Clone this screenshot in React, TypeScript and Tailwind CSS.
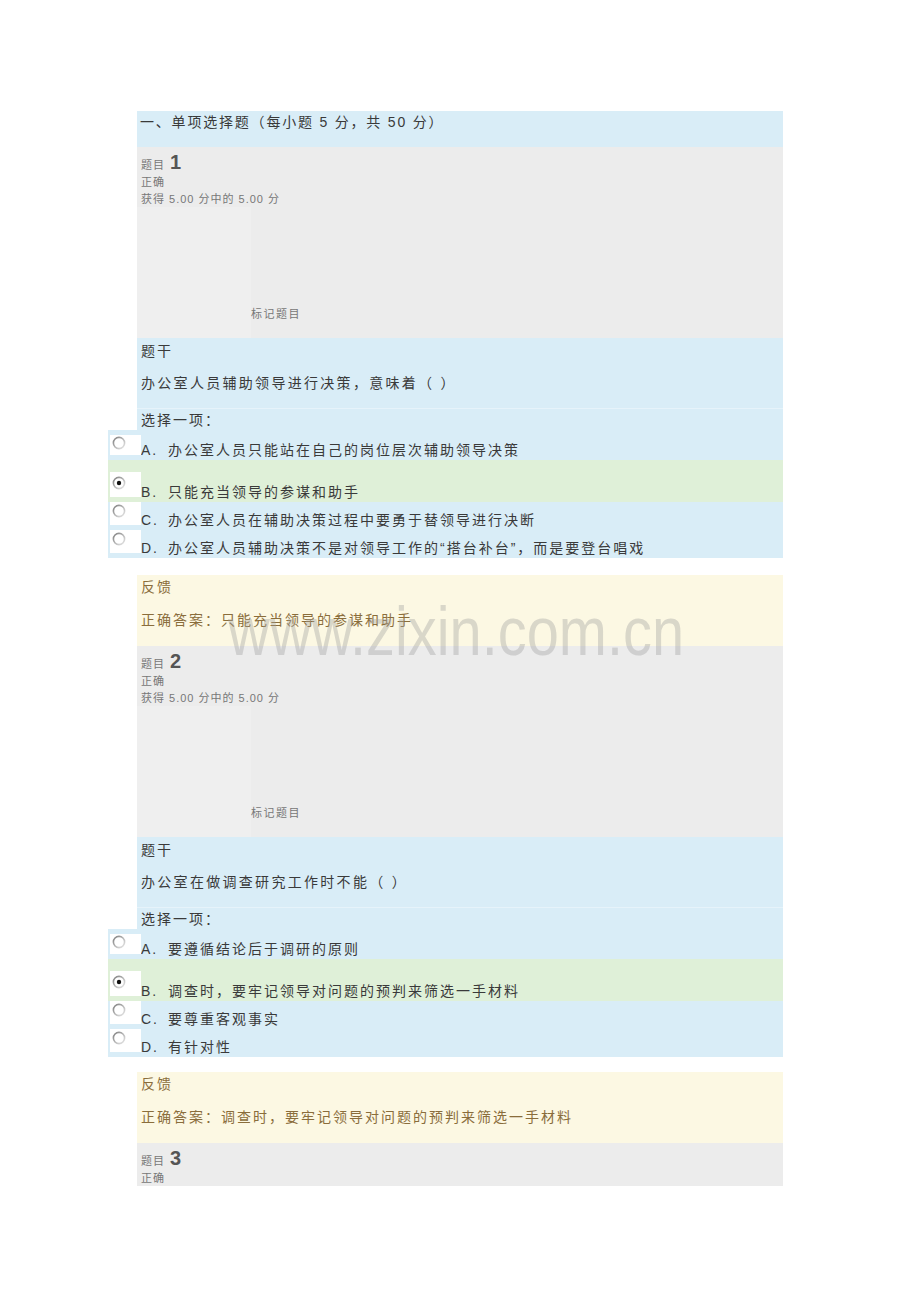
import React from "react";

function Radio({ checked, id }: { checked?: boolean; id: string }) {
  return (
    <svg width="14" height="14" viewBox="0 0 14 14">
      <defs>
        <linearGradient id={id} x1="0" y1="0" x2="1" y2="1">
          <stop offset="0" stopColor="#7d7d7d" />
          <stop offset="0.5" stopColor="#b5b5b5" />
          <stop offset="1" stopColor="#e8e8e8" />
        </linearGradient>
      </defs>
      <circle cx="7" cy="7" r="5.6" fill="#ffffff" stroke={`url(#${id})`} strokeWidth="1.6" />
      {checked && <circle cx="7" cy="7" r="2.2" fill="#111111" />}
    </svg>
  );
}

type Opt = {
  letter: string;
  text: string;
  checked?: boolean;
  rowCls: string;
  boxCls: string;
  radioCls: string;
};

function OptionRow({ o, id }: { o: Opt; id: string }) {
  return (
    <div className={o.rowCls}>
      <div className={o.boxCls}>
        <div className={o.radioCls}>
          <Radio checked={o.checked} id={id} />
        </div>
      </div>
      <div className="flex text-[14px] leading-[18px] tracking-[2px] text-[#3a3a3a] whitespace-nowrap">
        <span className="w-[27px]">{o.letter}</span>
        <span>{o.text}</span>
      </div>
    </div>
  );
}

function InfoBlock({ n, full }: { n: string; full: boolean }) {
  if (!full) {
    return (
      <div className="bg-[#ececec] h-[43px] pt-[4px] pl-[4px] overflow-hidden">
        <div className="flex items-baseline leading-[22px] h-[22px]">
          <span className="text-[11px] tracking-[1px] text-[#777777]">题目</span>
          <span className="ml-[5px] text-[20px] font-bold text-[#555555]">{n}</span>
        </div>
        <div className="text-[11px] leading-[18px] tracking-[1px] text-[#777777]">正确</div>
      </div>
    );
  }
  return (
    <div className="bg-[#ececec] h-[191px] flex flex-col">
      <div className="pt-[4px] pl-[4px] h-[60px]">
        <div className="flex items-baseline leading-[22px] h-[22px]">
          <span className="text-[11px] tracking-[1px] text-[#777777]">题目</span>
          <span className="ml-[5px] text-[20px] font-bold text-[#555555]">{n}</span>
        </div>
        <div className="text-[11px] leading-[18px] tracking-[1px] text-[#777777]">正确</div>
        <div className="text-[11px] leading-[16px] tracking-[1px] text-[#777777] whitespace-nowrap">
          获得 5.00 分中的 5.00 分
        </div>
      </div>
      <div className="flex flex-1">
        <div className="w-[114px] bg-[#efefef]" />
        <div className="flex-1 flex items-end pb-[16px]">
          <span className="text-[11px] leading-[16px] tracking-[1.5px] text-[#777777]">标记题目</span>
        </div>
      </div>
    </div>
  );
}

function Question({
  n,
  stem,
  options,
  answer,
  gap,
  idp,
}: {
  n: string;
  stem: string;
  options: Opt[];
  answer: string;
  gap: string;
  idp: string;
}) {
  return (
    <div>
      <InfoBlock n={n} full />
      <div className="bg-[#d9edf7]">
        <div className="h-[30px] pt-[4px] pl-[4px] text-[14px] leading-[18px] tracking-[2px] text-[#3a3a3a]">题干</div>
        <div className="h-[41px] pt-[6px] pl-[4px] border-b border-[#e6f3fa] text-[14px] leading-[18px] tracking-[2.3px] text-[#3a3a3a] whitespace-nowrap">
          {stem}
        </div>
        <div className="h-[21px] pt-[2px] pl-[4px] text-[14px] leading-[18px] tracking-[2px] text-[#3a3a3a]">选择一项：</div>
      </div>
      <div className="-ml-[29px] w-[675px]">
        {options.map((o, i) => (
          <OptionRow key={i} o={o} id={`${idp}-${i}`} />
        ))}
      </div>
      <div className={gap}>
        <div className="bg-[#fcf8e3] h-[71px] pt-[3px] pl-[4px] text-[14px] leading-[18px] tracking-[2px] text-[#8a6d3b]">
          <div>反馈</div>
          <div className="mt-[15px] whitespace-nowrap">{answer}</div>
        </div>
      </div>
    </div>
  );
}

const rowA = "flex items-end h-[30px] pb-[1px] bg-[#d9edf7]";
const rowB = "flex items-end h-[42px] pb-[1px] bg-[#dff0d8]";
const rowC = "flex items-end h-[28px] pb-[1px] bg-[#d9edf7]";
const boxA = "relative ml-[2px] mb-[4px] w-[31px] h-[20px] bg-white shrink-0";
const boxB = "relative ml-[2px] mb-[4px] w-[31px] h-[25px] bg-white shrink-0";
const boxC = "relative ml-[2px] mb-[4px] w-[31px] h-[23px] bg-white shrink-0";
const radA = "absolute left-[2px] top-[1px]";
const radB = "absolute left-[2px] top-[4px]";
const radC = "absolute left-[2px] top-[2px]";

const q1: Opt[] = [
  { letter: "A.", text: "办公室人员只能站在自己的岗位层次辅助领导决策", rowCls: rowA, boxCls: boxA, radioCls: radA },
  { letter: "B.", text: "只能充当领导的参谋和助手", checked: true, rowCls: rowB, boxCls: boxB, radioCls: radB },
  { letter: "C.", text: "办公室人员在辅助决策过程中要勇于替领导进行决断", rowCls: rowC, boxCls: boxC, radioCls: radC },
  { letter: "D.", text: "办公室人员辅助决策不是对领导工作的“搭台补台”，而是要登台唱戏", rowCls: rowC, boxCls: boxC, radioCls: radC },
];

const q2: Opt[] = [
  { letter: "A.", text: "要遵循结论后于调研的原则", rowCls: rowA, boxCls: boxA, radioCls: radA },
  { letter: "B.", text: "调查时，要牢记领导对问题的预判来筛选一手材料", checked: true, rowCls: rowB, boxCls: boxB, radioCls: radB },
  { letter: "C.", text: "要尊重客观事实", rowCls: rowC, boxCls: boxC, radioCls: radC },
  { letter: "D.", text: "有针对性", rowCls: rowC, boxCls: boxC, radioCls: radC },
];

export default function App() {
  return (
    <div className="relative w-[920px] h-[1302px] bg-white overflow-hidden [font-family:'Liberation_Sans','Noto_Sans_CJK_SC',sans-serif]">
      <div className="ml-[137px] w-[646px] pt-[111px]">
        <div className="bg-[#d9edf7] h-[36px] pt-[2px] pl-[3px] text-[14px] leading-[18px] tracking-[1.8px] text-[#3a3a3a] whitespace-nowrap">
          一、单项选择题（每小题 5 分，共 50 分）
        </div>
        <Question
          n="1"
          stem="办公室人员辅助领导进行决策，意味着（ ）"
          options={q1}
          answer="正确答案：只能充当领导的参谋和助手"
          gap="mt-[17px]"
          idp="q1"
        />
        <Question
          n="2"
          stem="办公室在做调查研究工作时不能（ ）"
          options={q2}
          answer="正确答案：调查时，要牢记领导对问题的预判来筛选一手材料"
          gap="mt-[15px]"
          idp="q2"
        />
        <InfoBlock n="3" full={false} />
      </div>
      <div className="absolute left-[228px] top-[597px] text-[68px] leading-none whitespace-nowrap origin-left scale-x-[0.85] text-[rgba(160,160,160,0.38)] pointer-events-none [font-family:'Liberation_Sans',sans-serif]">
        www.zixin.com.cn
      </div>
    </div>
  );
}
